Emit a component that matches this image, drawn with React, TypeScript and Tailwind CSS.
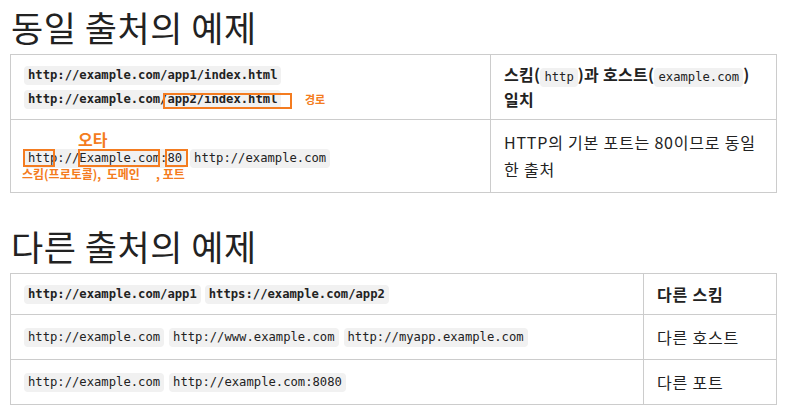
import React from 'react';

const kr = { fontFamily: '"Noto Sans CJK KR", "Noto Sans", sans-serif' };

function Code({ children, bold = false }: { children: React.ReactNode; bold?: boolean }) {
  return (
    <code
      className={`inline-block rounded bg-[#f1f1f1] px-1 text-[12.2px] leading-[19px] tracking-normal text-[#222] ${bold ? 'font-bold' : 'font-normal'}`}
      style={{ fontFamily: '"DejaVu Sans Mono", "Liberation Mono", monospace' }}
    >
      {children}
    </code>
  );
}

function OrangeBox({ className }: { className: string }) {
  return <div className={`absolute border-2 border-[#f47c20] ${className}`} />;
}

function Note({ className, children }: { className: string; children: React.ReactNode }) {
  return (
    <div className={`absolute font-bold text-[#f47c20] whitespace-pre ${className}`} style={kr}>
      {children}
    </div>
  );
}

export default function App() {
  return (
    <div className="bg-white w-[793px] h-[413px] pl-[10px] text-[#222]" style={kr}>
      <h1 className="text-[35px] leading-[54px] font-normal pl-[1px] tracking-[0.5px]">동일 출처의 예제</h1>

      <table className="border-collapse w-[766px] table-fixed">
        <colgroup>
          <col className="w-[480px]" />
          <col className="w-[286px]" />
        </colgroup>
        <thead>
          <tr className="h-[65px]">
            <th className="relative border border-[#ccc] px-[13px] text-left align-middle">
              <div className="flex flex-col gap-[5px] items-start">
                <Code bold>http://example.com/app1/index.html</Code>
                <Code bold>http://example.com/app2/index.html</Code>
              </div>
              <OrangeBox className="left-[152px] top-[38px] w-[129px] h-[16px]" />
              <Note className="left-[294px] top-[36px] text-[11px]">경로</Note>
            </th>
            <th className="border border-[#ccc] px-[13px] text-left align-middle text-[16px] leading-[25px] font-bold tracking-[0.3px]">
              스킴(<Code>http</Code>)과 호스트(<Code>example.com</Code>)
              <br />
              일치
            </th>
          </tr>
        </thead>
        <tbody>
          <tr className="h-[73px]">
            <td className="relative border border-[#ccc] px-[13px] align-middle">
              <div className="flex gap-[4px] pt-[4px]">
                <Code>http://Example.com:80</Code>
                <Code>http://example.com</Code>
              </div>
              <OrangeBox className="left-[12px] top-[29px] w-[32px] h-[18px]" />
              <OrangeBox className="left-[67px] top-[29px] w-[82px] h-[18px]" />
              <OrangeBox className="left-[154px] top-[29px] w-[23px] h-[18px]" />
              <Note className="left-[67px] top-[10px] text-[16px] leading-[18px]">오타</Note>
              <Note className="left-[11px] top-[47px] text-[12px] leading-[14px]">{'스킴(프로토콜),  도메인      , 포트'}</Note>
            </td>
            <td className="border border-[#ccc] px-[13px] align-middle text-[16px] leading-[27px] tracking-[0.8px]">
              HTTP의 기본 포트는 80이므로 동일한 출처
            </td>
          </tr>
        </tbody>
      </table>

      <h1 className="text-[35px] leading-[54px] font-normal pl-[1px] mt-[26px] tracking-[0.5px]">다른 출처의 예제</h1>

      <table className="border-collapse w-[766px] table-fixed">
        <colgroup>
          <col className="w-[633px]" />
          <col className="w-[133px]" />
        </colgroup>
        <thead>
          <tr className="h-[41px]">
            <th className="border border-[#ccc] px-[13px] text-left align-middle">
              <div className="flex gap-[4px]">
                <Code bold>http://example.com/app1</Code>
                <Code bold>https://example.com/app2</Code>
              </div>
            </th>
            <th className="border border-[#ccc] px-[13px] text-left align-middle text-[16px] font-bold tracking-[0.8px]">다른 스킴</th>
          </tr>
        </thead>
        <tbody>
          <tr className="h-[45px]">
            <td className="border border-[#ccc] px-[13px] align-middle">
              <div className="flex gap-[5px]">
                <Code>http://example.com</Code>
                <Code>http://www.example.com</Code>
                <Code>http://myapp.example.com</Code>
              </div>
            </td>
            <td className="border border-[#ccc] px-[13px] align-middle text-[16px] tracking-[0.8px]">다른 호스트</td>
          </tr>
          <tr className="h-[45px]">
            <td className="border border-[#ccc] px-[13px] align-middle">
              <div className="flex gap-[5px]">
                <Code>http://example.com</Code>
                <Code>http://example.com:8080</Code>
              </div>
            </td>
            <td className="border border-[#ccc] px-[13px] align-middle text-[16px] tracking-[0.8px]">다른 포트</td>
          </tr>
        </tbody>
      </table>
    </div>
  );
}
